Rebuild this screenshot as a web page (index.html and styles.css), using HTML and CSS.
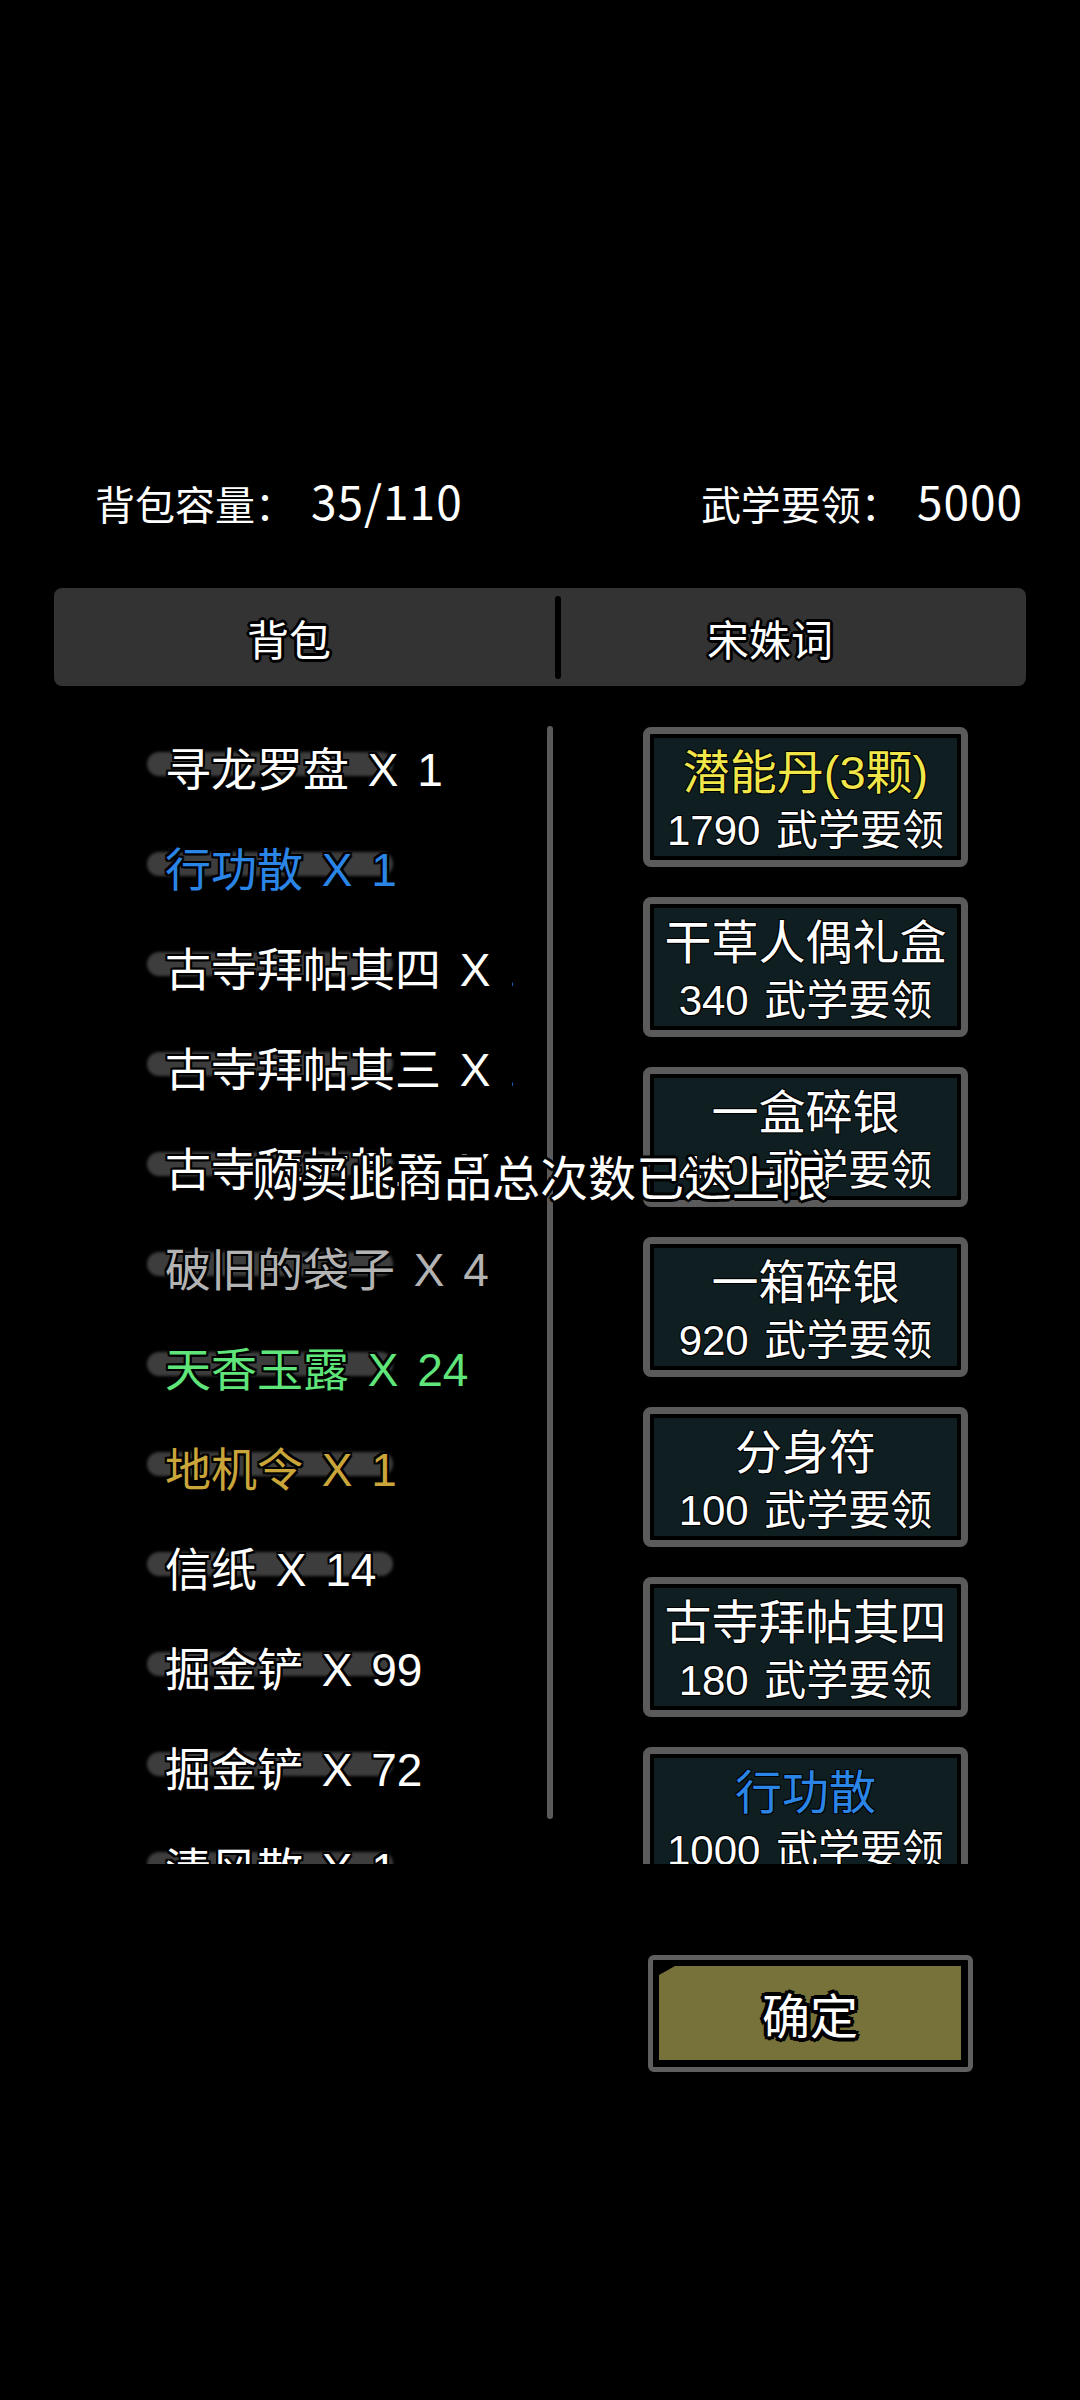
FILE: index.html
```html
<!DOCTYPE html>
<html lang="zh-CN">
<head>
<meta charset="utf-8">
<title>背包</title>
<link rel="stylesheet" href="styles.css">
</head>
<body>
<div class="page">
  <div class="header">
    <div class="stat">背包容量：<span class="num">35/110</span></div>
    <div class="stat">武学要领：<span class="num">5000</span></div>
  </div>

  <div class="tabs">
    <div class="tab tab-left">背包</div>
    <div class="tab-divider"></div>
    <div class="tab tab-right">宋姝词</div>
  </div>

  <div class="main">
    <div class="list">
      <div class="item c-white">寻龙罗盘 X 1</div>
      <div class="item c-blue">行功散 X 1</div>
      <div class="item c-white">古寺拜帖其四 X 1</div>
      <div class="item c-white">古寺拜帖其三 X 1</div>
      <div class="item c-white">古寺拜帖其二 X 1</div>
      <div class="item c-grey">破旧的袋子 X 4</div>
      <div class="item c-green">天香玉露 X 24</div>
      <div class="item c-gold">地机令 X 1</div>
      <div class="item c-white">信纸 X 14</div>
      <div class="item c-white">掘金铲 X 99</div>
      <div class="item c-white">掘金铲 X 72</div>
      <div class="item c-white">清风散 X 1</div>
    </div>
    <div class="scrollbar"></div>
    <div class="cards">
      <div class="card"><div class="card-title c-yellow">潜能丹(3颗)</div><div class="card-price">1790 武学要领</div></div>
      <div class="card"><div class="card-title">干草人偶礼盒</div><div class="card-price">340 武学要领</div></div>
      <div class="card"><div class="card-title">一盒碎银</div><div class="card-price">460 武学要领</div></div>
      <div class="card"><div class="card-title">一箱碎银</div><div class="card-price">920 武学要领</div></div>
      <div class="card"><div class="card-title">分身符</div><div class="card-price">100 武学要领</div></div>
      <div class="card"><div class="card-title">古寺拜帖其四</div><div class="card-price">180 武学要领</div></div>
      <div class="card"><div class="card-title c-blue">行功散</div><div class="card-price">1000 武学要领</div></div>
    </div>
  </div>

  <div class="footer">
    <div class="confirm">
      <div class="confirm-fill"><span class="confirm-text">确定</span></div>
    </div>
  </div>

  <div class="toast">购买此商品总次数已达上限</div>
</div>
</body>
</html>
```

FILE: styles.css
```css
html, body {
  margin: 0;
  padding: 0;
  background: #000;
}

body {
  width: 1080px;
  height: 2400px;
  overflow: hidden;
  font-family: "Noto Sans CJK SC", "Noto Sans", sans-serif;
  color: #fff;
}

.page {
  position: relative;
  width: 1080px;
  height: 2400px;
}

.header {
  display: flex;
  justify-content: space-between;
  align-items: baseline;
  padding: 474px 57px 0 95px;
  font-size: 40px;
  line-height: 52px;
  color: #fff;
}

.num {
  font-family: "Noto Sans CJK SC", sans-serif;
  font-size: 46px;
  letter-spacing: 1px;
  margin-left: 16px;
}

.tabs {
  display: flex;
  margin: 59px 54px 0 54px;
  height: 98px;
  background: #333333;
  border-radius: 8px;
  align-items: center;
}

.tab {
  display: flex;
  align-items: center;
  justify-content: center;
  height: 100%;
  font-size: 42px;
  color: #fff;
  text-shadow:
    2px 2px 0 #000, -2px 2px 0 #000, 2px -2px 0 #000, -2px -2px 0 #000,
    3px 0 0 #000, -3px 0 0 #000, 0 3px 0 #000, 0 -3px 0 #000;
}

.tab-left {
  width: 501px;
  padding-right: 31px;
  box-sizing: border-box;
}

.tab-right {
  width: 465px;
  padding-right: 47px;
  box-sizing: border-box;
}

.tab-divider {
  width: 6px;
  height: 83px;
  background: #000;
  border-radius: 3px;
}

.main {
  display: flex;
  margin-top: 34px;
  padding-left: 140px;
  height: 1144px;
  overflow: hidden;
}

.list {
  position: relative;
  z-index: 0;
  width: 373px;
  flex-shrink: 0;
  height: 100%;
  overflow: hidden;
}

.item {
  position: relative;
  height: 100px;
  line-height: 100px;
  padding-left: 25px;
  font-family: "Liberation Sans", "Noto Sans CJK SC", sans-serif;
  font-size: 46px;
  word-spacing: 6px;
  white-space: nowrap;
  text-shadow:
    2px 2px 0 #000, -2px 2px 0 #000, 2px -2px 0 #000, -2px -2px 0 #000,
    2px 0 0 #000, -2px 0 0 #000, 0 2px 0 #000, 0 -2px 0 #000;
}

.item::before {
  content: "";
  position: absolute;
  left: 7px;
  top: 32px;
  width: 246px;
  height: 24px;
  border-radius: 12px;
  background: #3d3d3d;
  filter: blur(1.5px);
  z-index: -1;
}

.c-white { color: #ffffff; }
.c-blue { color: #2b85e6; }
.c-grey { color: #b3b3b3; }
.c-green { color: #5fe57a; }
.c-gold { color: #c9a53a; }
.c-yellow { color: #f0e64a; }

.scrollbar {
  flex-shrink: 0;
  width: 6px;
  height: 1093px;
  margin-top: 6px;
  margin-left: 34px;
  background: #5a5a5a;
  border-radius: 3px;
}

.cards {
  flex-shrink: 0;
  width: 325px;
  margin-left: 90px;
  padding-top: 7px;
  display: flex;
  flex-direction: column;
  gap: 30px;
}

.card {
  flex-shrink: 0;
  box-sizing: border-box;
  height: 140px;
  border: 7px solid #5b5b5b;
  border-radius: 8px;
  background: #0f1f21;
  box-shadow: inset 0 0 0 4px #000;
  padding-top: 10px;
  text-align: center;
  overflow: hidden;
  font-family: "Liberation Sans", "Noto Sans CJK SC", sans-serif;
}

.card-title {
  font-size: 47px;
  line-height: 58px;
  white-space: nowrap;
  color: #fff;
  text-shadow: 1px 1px 0 #000, -1px -1px 0 #000, 1px -1px 0 #000, -1px 1px 0 #000;
}

.card-title.c-yellow { color: #f0e64a; }
.card-title.c-blue { color: #2b85e6; }

.card-price {
  font-size: 42px;
  line-height: 58px;
  word-spacing: 4px;
  white-space: nowrap;
  color: #fff;
  text-shadow: 1px 1px 0 #000, -1px -1px 0 #000, 1px -1px 0 #000, -1px 1px 0 #000;
}

.footer {
  display: flex;
  margin-top: 91px;
  padding-left: 648px;
}

.confirm {
  box-sizing: border-box;
  width: 325px;
  height: 117px;
  border: 5px solid #5f5f5f;
  border-radius: 6px;
  background: #000;
  padding: 6px 7px 7px 6px;
}

.confirm-fill {
  width: 100%;
  height: 100%;
  background: #76723a;
  clip-path: polygon(0 9px, 16px 0, 100% 0, 100% 100%, 0 100%);
  display: flex;
  align-items: center;
  justify-content: center;
}

.confirm-text {
  font-size: 48px;
  line-height: 60px;
  color: #fff;
  text-shadow:
    3px 3px 0 #000, -3px 3px 0 #000, 3px -3px 0 #000, -3px -3px 0 #000,
    4px 0 0 #000, -4px 0 0 #000, 0 4px 0 #000, 0 -4px 0 #000;
}

.toast {
  position: absolute;
  left: 0;
  right: 0;
  top: 1145px;
  text-align: center;
  font-size: 48px;
  line-height: 60px;
  color: #fff;
  white-space: nowrap;
  text-shadow:
    2px 2px 0 #000, -2px 2px 0 #000, 2px -2px 0 #000, -2px -2px 0 #000,
    3px 0 0 #000, -3px 0 0 #000, 0 3px 0 #000, 0 -3px 0 #000;
}
```
